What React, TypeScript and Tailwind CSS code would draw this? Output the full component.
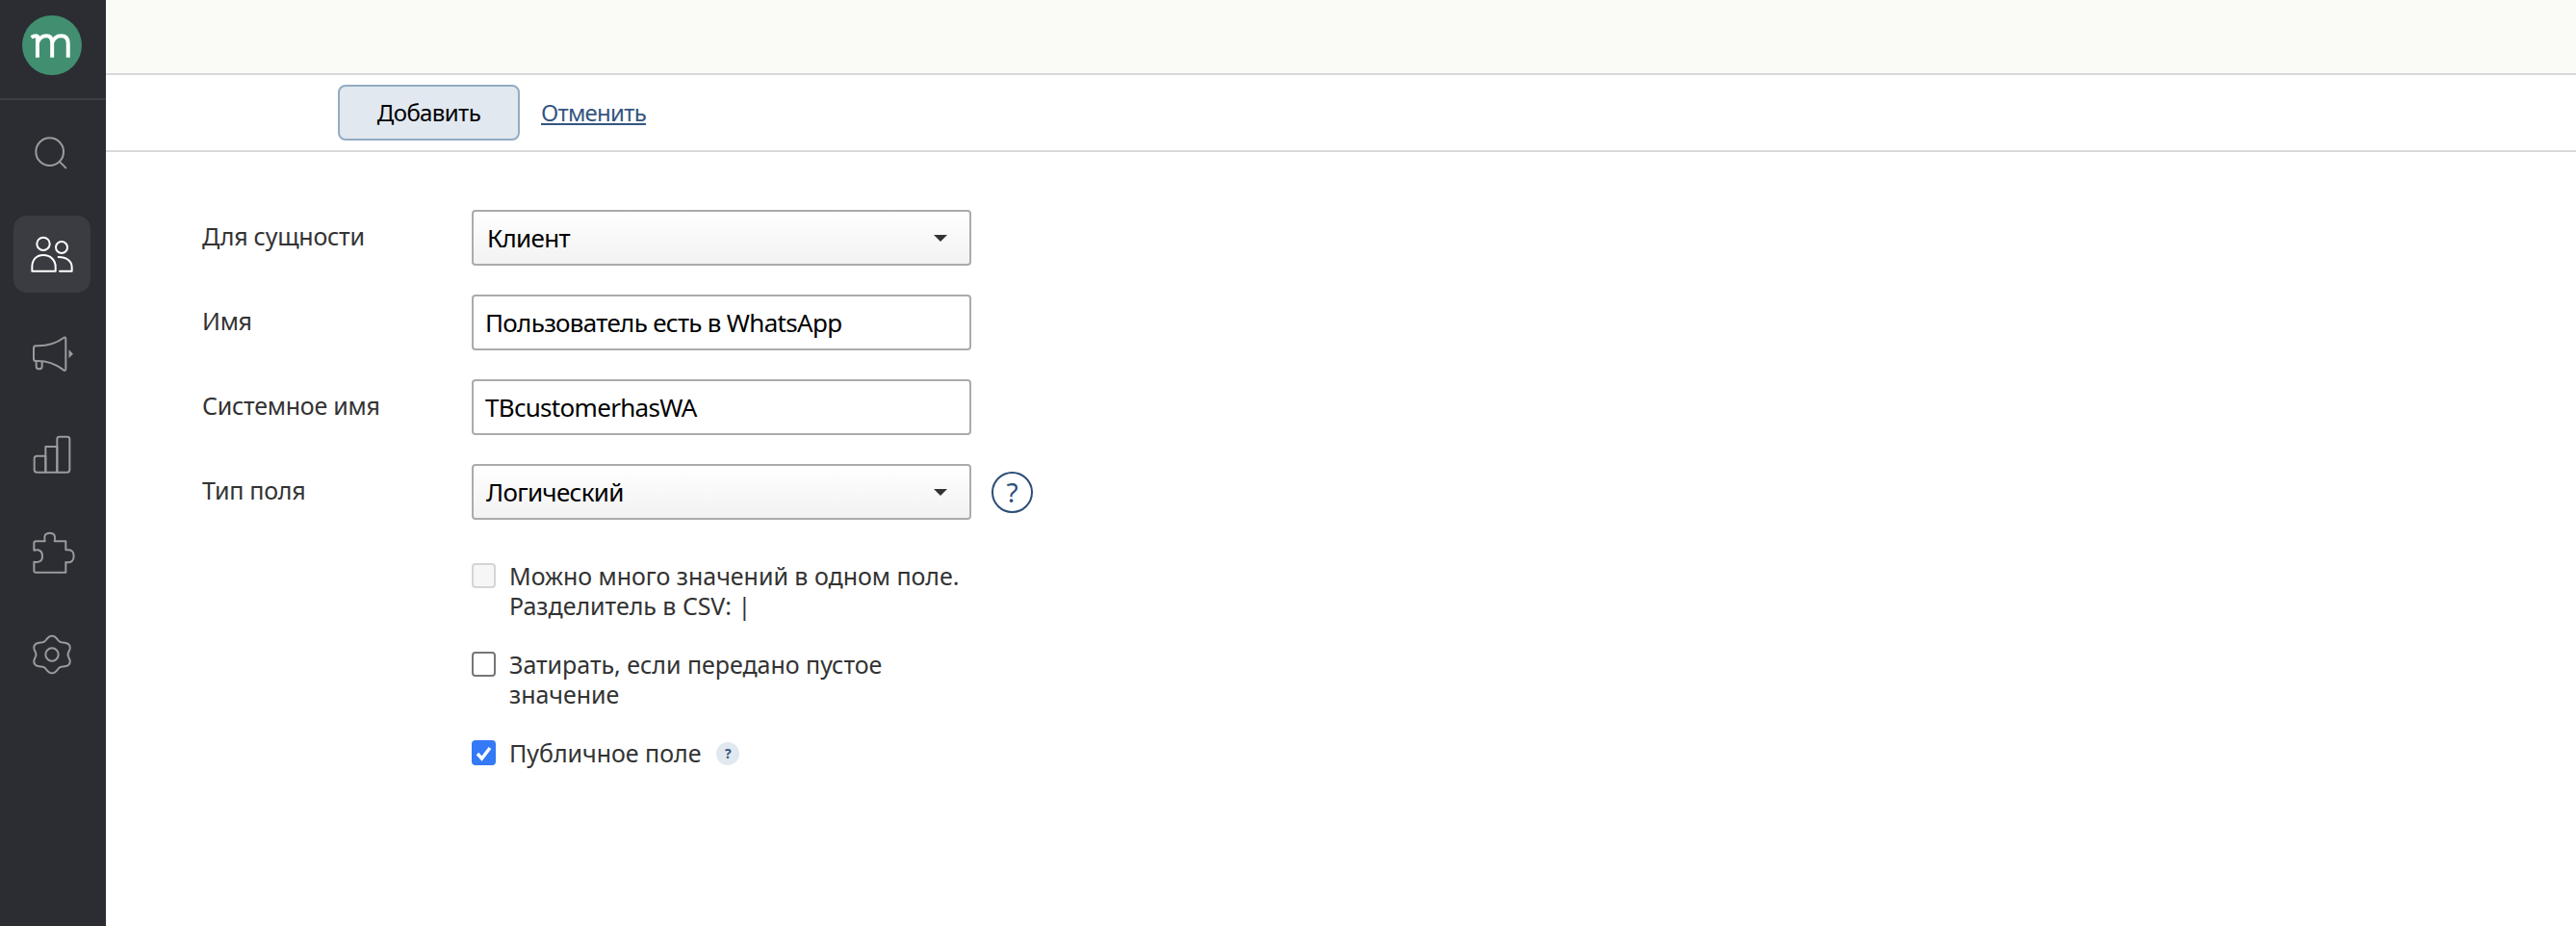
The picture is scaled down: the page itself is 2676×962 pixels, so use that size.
const F = "[font-family:'Noto_Sans',sans-serif]";

const gearPath = (() => {
  const pts: string[] = [];
  for (let i = 0; i < 180; i++) {
    const t = (i / 180) * Math.PI * 2;
    const r = 52 - 6 * Math.cos(6 * t);
    pts.push(`${(162 + 1.08 * r * Math.cos(t)).toFixed(1)} ${(1020 + r * Math.sin(t)).toFixed(1)}`);
  }
  return "M" + pts.join("L") + "Z";
})();

function NavIcon({ y, active, children }: { y: number; active?: boolean; children: React.ReactNode }) {
  return (
    <div className={`flex h-20 w-20 items-center justify-center rounded-[14px] ${active ? "bg-[#3a3c42] text-white" : "text-[#9a9b9e]"}`}>
      <svg width="80" height="80" viewBox={`42 ${y} 240 240`} fill="none" stroke="currentColor" strokeWidth="6" strokeLinecap="round" strokeLinejoin="round">
        {children}
      </svg>
    </div>
  );
}

function Sidebar() {
  return (
    <aside className="flex h-full w-[110px] shrink-0 flex-col items-center bg-[#2b2d33]">
      <div className="flex h-[104px] w-full items-start justify-center border-b-2 border-[#3c3e44] pr-[2px] pt-4">
        <svg width="62" height="62" viewBox="68 48 187 187">
          <circle cx="161.5" cy="141.5" r="93.5" fill="#418f70" />
          <path d="M97 117 Q110 109 116 114 V180 M116 134 Q124 112 144 112 Q162 112 162 134 V180 M162 134 Q170 112 190 112 Q212 112 212 136 V180" fill="none" stroke="#fff" strokeWidth="12" />
        </svg>
      </div>
      <nav className="mt-4 flex flex-col gap-6 pr-[2px]">
        <NavIcon y={360}>
          <circle cx="155" cy="473" r="43" />
          <path d="M187 505 L205 523" />
        </NavIcon>
        <NavIcon y={672} active>
          <circle cx="135" cy="760" r="20" />
          <circle cx="192" cy="771" r="18" />
          <path d="M100 845 V832 C100 808 115 795 135 795 C157 795 173 810 173 832 V845 Z" />
          <path d="M182 801 C208 801 224 815 224 833 V845 H186" />
        </NavIcon>
        <NavIcon y={-36}>
          <path d="M118 58 Q165 58 198 33 Q205 28 205 38 V128 Q205 140 195 131 Q160 105 118 105 H112 Q105 105 105 98 V65 Q105 58 112 58 Z" />
          <path d="M113 106 V122 Q113 130 122 130 Q131 130 131 122 V108" />
          <path d="M216 72 L227 83 L216 94 Z" fill="currentColor" strokeWidth="2" />
        </NavIcon>
        <NavIcon y={276}>
          <path d="M115 401 H142 V452 H115 Q107 452 107 444 V409 Q107 401 115 401 Z" />
          <path d="M142 372 H178 V452 H142 Z" />
          <path d="M178 348 Q178 341 186 341 H209 Q217 341 217 348 V444 Q217 452 209 452 H178 Z" />
        </NavIcon>
        <NavIcon y={588}>
          <path d="M112 667 H140 Q134 641 155 641 Q176 641 170 667 H205 V694 Q230 690 230 713 Q230 736 205 732 V764 H112 Q106 764 106 758 V731 Q132 736 132 713 Q132 690 106 695 V673 Q106 667 112 667 Z" />
        </NavIcon>
        <NavIcon y={900}>
          <path d={gearPath} />
          <circle cx="162" cy="1020" r="20" />
        </NavIcon>
      </nav>
    </aside>
  );
}

function Caret() {
  return <span className="h-0 w-0 border-x-[7px] border-t-[7px] border-x-transparent border-t-[#333]" />;
}

function Row({ label, children }: { label: string; children: React.ReactNode }) {
  return (
    <div className="flex h-[58px] items-center">
      <div className="w-[280px] pb-[3px] text-[25px] leading-[31px] tracking-[-0.25px] text-[#333]">{label}</div>
      {children}
    </div>
  );
}

function SelectBox({ value, pl }: { value: string; pl: string }) {
  return (
    <div className={`flex h-[58px] w-[519px] items-center justify-between rounded-[4px] border-2 border-[#ababab] bg-gradient-to-b from-white to-[#f2f2f2] pr-[23px] ${pl} text-[26px] tracking-[-0.7px] text-black`}>
      <span>{value}</span>
      <Caret />
    </div>
  );
}

function InputBox({ value }: { value: string }) {
  return (
    <div className="flex h-[58px] w-[519px] items-center rounded-[4px] border-2 border-[#ababab] bg-white pl-[12px] text-[26px] tracking-[-0.7px] text-black">
      {value}
    </div>
  );
}

function Check({ children, kind }: { children: React.ReactNode; kind: "disabled" | "off" | "on" }) {
  const box =
    kind === "disabled"
      ? "border-2 border-[#d5d5d5] bg-[#f6f6f6]"
      : kind === "off"
        ? "border-2 border-[#767676] bg-white"
        : "bg-[#3479f6]";
  return (
    <div className="flex items-start">
      <div className={`mt-[1px] flex h-[26px] w-[25px] shrink-0 items-center justify-center rounded-[4px] ${box}`}>
        {kind === "on" && (
          <svg width="19" height="17" viewBox="0 0 19 17" fill="none">
            <path d="M3 9 L7.5 14 L16 3" stroke="#fff" strokeWidth="3.4" />
          </svg>
        )}
      </div>
      <div className="ml-[14px] -mt-[1px] mb-[1px] text-[25px] leading-[31px] tracking-[-0.03px] text-[#333]">{children}</div>
    </div>
  );
}

export default function App() {
  return (
    <div className={`flex h-[962px] w-full overflow-hidden bg-white ${F}`}>
      <Sidebar />
      <main className="flex min-w-0 flex-1 flex-col">
        <div className="h-[78px] border-b-2 border-[#d8d8d8] bg-[#fafaf7]" />
        <div className="flex h-[80px] items-center border-b-2 border-[#d8d8d8] pl-[241px]">
          <button className="flex h-[58px] w-[189px] items-center justify-center rounded-[8px] border-2 border-[#92acc4] bg-[#e1e8ef] text-[24px] tracking-[-0.6px] text-black">
            Добавить
          </button>
          <a className="mb-[1px] ml-[22px] text-[24px] tracking-[-0.75px] text-[#34557f] underline">Отменить</a>
        </div>
        <div className="flex flex-col pl-[100px] pt-[60px]">
          <div className="flex flex-col gap-[30px]">
            <Row label="Для сущности"><SelectBox value="Клиент" pl="pl-[14px]" /></Row>
            <Row label="Имя"><InputBox value="Пользователь есть в WhatsApp" /></Row>
            <Row label="Системное имя"><InputBox value="TBcustomerhasWA" /></Row>
            <Row label="Тип поля">
              <SelectBox value="Логический" pl="pl-[13px]" />
              <div className="ml-[21px] flex h-[43px] w-[43px] items-center justify-center rounded-full border-2 border-[#2d4e78] text-[28px] text-[#2d4e78]">?</div>
            </Row>
          </div>
          <div className="ml-[280px] mt-[44px] flex flex-col gap-[30px]">
            <Check kind="disabled">Можно много значений в одном поле.<br />Разделитель в CSV: |</Check>
            <Check kind="off">Затирать, если передано пустое<br />значение</Check>
            <Check kind="on">
              <span className="inline-flex items-center">
                Публичное поле
                <span className="ml-[16px] flex h-6 w-6 items-center justify-center rounded-full bg-[#e1e8ef] text-[14px] font-bold text-[#34557f]">?</span>
              </span>
            </Check>
          </div>
        </div>
      </main>
    </div>
  );
}
